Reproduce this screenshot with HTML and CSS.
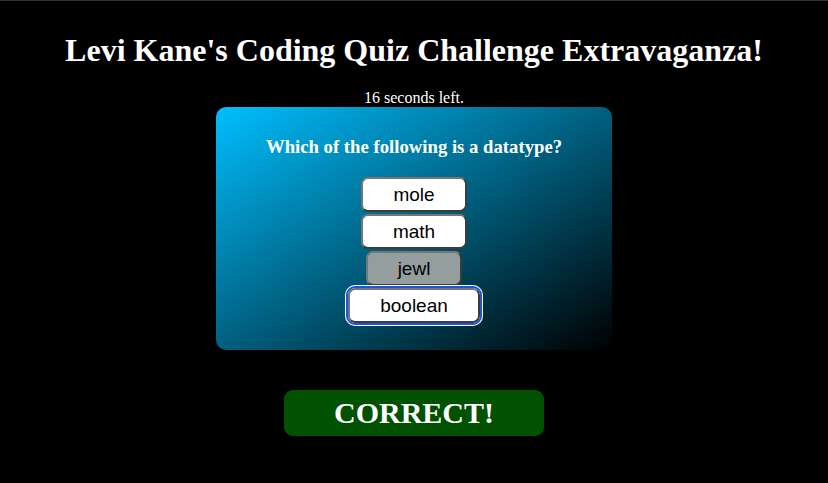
FILE: index.html
```html
<!DOCTYPE html>
<html>
<head>
<meta charset="utf-8">
<link rel="stylesheet" href="styles.css">
</head>
<body>
<header class="title">Levi Kane's Coding Quiz Challenge Extravaganza!</header>
<div class="timer">16 seconds left.</div>
<main class="card">
  <div class="question">Which of the following is a datatype?</div>
  <div class="answers">
    <button class="answer">mole</button>
    <button class="answer">math</button>
    <button class="answer wrong">jewl</button>
    <button class="answer focused">boolean</button>
  </div>
</main>
<div class="result">CORRECT!</div>
</body>
</html>
```
FILE: styles.css
```css
html, body {
  margin: 0;
  padding: 0;
  background: #000;
}
body {
  border-top: 1px solid #333;
  color: #fff;
  font-family: "Liberation Serif", "Times New Roman", serif;
  text-align: center;
  height: 482px;
  overflow: hidden;
}
.title {
  font-weight: bold;
  font-size: 32px;
  line-height: 38px;
  margin-top: 30px;
}
.timer {
  font-size: 16px;
  line-height: 18px;
  margin-top: 20px;
}
.card {
  width: 396px;
  box-sizing: border-box;
  margin: 0 auto;
  border-radius: 10px;
  background: linear-gradient(to bottom right, #00bfff, #000);
  padding: 29px 0 27px;
}
.question {
  font-weight: bold;
  font-size: 18.72px;
  line-height: 22px;
}
.answers {
  margin-top: 19px;
  display: flex;
  flex-direction: column;
  align-items: center;
  gap: 2px;
}
.answer {
  font-family: "Liberation Sans", Arial, sans-serif;
  font-size: 19px;
  line-height: 21px;
  color: #000;
  background: #fff;
  padding: 5px 30px;
  border: 2px solid #767676;
  border-right-color: #3c3c3c;
  border-bottom-color: #3c3c3c;
  border-radius: 7px;
  margin: 0;
}
.answer.wrong {
  background: #959e9f;
}
.answer.focused {
  outline: 2px solid #1a56d6;
  box-shadow: 0 0 0 3px #fff;
  outline-offset: 0;
}
.result {
  width: 260px;
  margin: 40px auto 0;
  background: #005200;
  border-radius: 9px;
  font-weight: bold;
  font-size: 30px;
  line-height: 46px;
}
```
